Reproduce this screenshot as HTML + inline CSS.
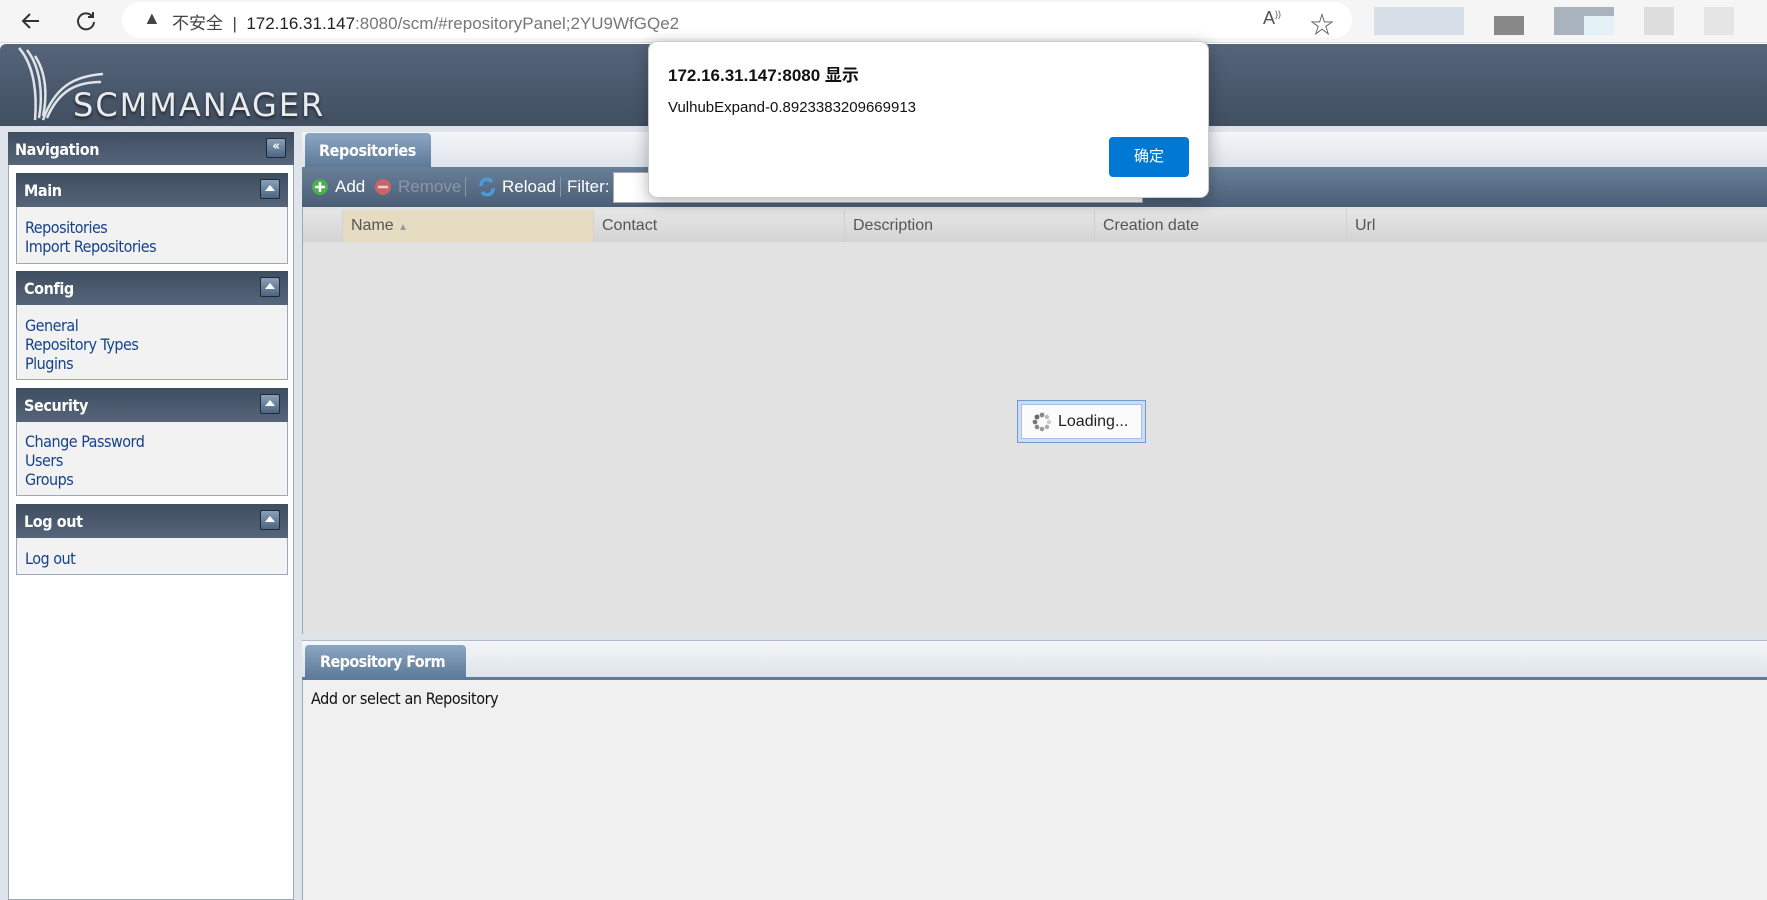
<!DOCTYPE html>
<html><head><meta charset="utf-8"><style>
*{box-sizing:border-box;margin:0;padding:0}
body{width:1767px;height:900px;overflow:hidden;background:#fff;font-family:"Liberation Sans","Noto Sans CJK SC",sans-serif;position:relative}
.a{position:absolute}
.hdr{background:linear-gradient(#3f4d60,#56657a);color:#fff;font-weight:bold;font-size:16px;font-family:"DejaVu Sans Condensed","Liberation Sans",sans-serif;letter-spacing:-0.4px;white-space:nowrap}
.box{border:1px solid #99a9bd;background:#f2f2f2}
.lnk{color:#15428b;font-size:16px;line-height:19px;font-family:"DejaVu Sans Condensed","Liberation Sans",sans-serif;letter-spacing:-0.5px}
.btn{position:absolute;right:8px;top:6px;width:20px;height:20px;border:1px solid #1d2a38;background:linear-gradient(#8aa0b8,#4c6580);border-radius:2px}
.btn.t::after{content:"";position:absolute;left:4px;top:5px;border-left:5px solid transparent;border-right:5px solid transparent;border-bottom:6px solid #fff}
.col{position:absolute;top:210px;height:32px;line-height:32px;color:#555;font-size:16px;border-left:1px solid #d0d0d0;padding-left:8px}
</style></head><body>
<div class="a" style="left:0;top:0;width:1767px;height:43px;background:#f5f5f5;border-bottom:1px solid #ddd"></div>
<svg class="a" style="left:18px;top:8px" width="26" height="26" viewBox="0 0 26 26"><path d="M21 13H5M12 6l-7 7 7 7" stroke="#333" stroke-width="2" fill="none"/></svg>
<svg class="a" style="left:73px;top:8px" width="26" height="26" viewBox="0 0 26 26"><path d="M19 8A8 8 0 1 0 21 14M20 4v5h-5" stroke="#333" stroke-width="2" fill="none"/></svg>
<div class="a" style="left:122px;top:2px;width:1230px;height:36px;background:#fff;border-radius:18px"></div>
<div class="a" style="left:143px;top:8px;font-size:18px;color:#444">▲</div>
<div class="a" style="left:172px;top:9px;font-size:17px;color:#444">不安全 &nbsp;|&nbsp; <span style="color:#222">172.16.31.147</span><span style="color:#777">:8080/scm/#repositoryPanel;2YU9WfGQe2</span></div>
<div class="a" style="left:1263px;top:8px;font-size:18px;color:#555">A<sup style="font-size:9px">))</sup></div>
<div class="a" style="left:1310px;top:5px;font-size:24px;color:#555">☆</div>
<div class="a" style="left:1374px;top:7px;width:90px;height:28px;background:#d6dfe8"></div>
<div class="a" style="left:1494px;top:16px;width:30px;height:19px;background:#888"></div>
<div class="a" style="left:1554px;top:7px;width:60px;height:28px;background:#a9b3bd"></div>
<div class="a" style="left:1584px;top:16px;width:30px;height:19px;background:#e3f0f6"></div>
<div class="a" style="left:1644px;top:7px;width:30px;height:28px;background:#ddd"></div>
<div class="a" style="left:1704px;top:7px;width:30px;height:28px;background:#e5e5e5"></div>
<div class="a" style="left:0;top:44px;width:1767px;height:82px;background:linear-gradient(#56647a,#414f62);border-radius:6px 0 0 0"></div>
<svg class="a" style="left:15px;top:46px" width="90" height="76" viewBox="0 0 90 76"><g stroke="#dfe3ea" fill="none" stroke-width="2.5"><path d="M4 2C20 20 22 50 20 74"/><path d="M12 4C26 22 28 50 24 72"/><path d="M20 10C32 28 32 52 28 70"/><path d="M28 74C40 40 60 30 88 28"/><path d="M32 72C44 44 62 36 86 36"/></g></svg>
<div class="a" style="left:73px;top:86px;font-size:32px;color:#e8ebef;letter-spacing:2px;font-family:'DejaVu Sans','Liberation Sans',sans-serif;text-shadow:0 2px 3px #222">SCMMANAGER</div>
<div class="a" style="left:0;top:126px;width:301px;height:774px;background:#dfe4eb"></div>
<div class="a" style="left:8px;top:132px;width:286px;height:768px;background:#fff;border:1px solid #99a9bd"></div>
<div class="a hdr" style="left:8px;top:132px;width:286px;height:33px;padding:8px 7px">Navigation<div class="btn" style="top:6px;font-size:13px;line-height:16px;text-align:center;color:#fff">«</div></div>
<div class="a box" style="left:16px;top:173px;width:272px;height:91px"></div>
<div class="a hdr" style="left:16px;top:173px;width:272px;height:34px;padding:8px 8px">Main<div class="btn t"></div></div>
<div class="a lnk" style="left:25px;top:218px">Repositories<br>Import Repositories</div>
<div class="a box" style="left:16px;top:271px;width:272px;height:109px"></div>
<div class="a hdr" style="left:16px;top:271px;width:272px;height:34px;padding:8px 8px">Config<div class="btn t"></div></div>
<div class="a lnk" style="left:25px;top:316px">General<br>Repository Types<br>Plugins</div>
<div class="a box" style="left:16px;top:388px;width:272px;height:108px"></div>
<div class="a hdr" style="left:16px;top:388px;width:272px;height:34px;padding:8px 8px">Security<div class="btn t"></div></div>
<div class="a lnk" style="left:25px;top:432px">Change Password<br>Users<br>Groups</div>
<div class="a box" style="left:16px;top:504px;width:272px;height:71px"></div>
<div class="a hdr" style="left:16px;top:504px;width:272px;height:34px;padding:8px 8px">Log out<div class="btn t"></div></div>
<div class="a lnk" style="left:25px;top:549px">Log out</div>
<div class="a" style="left:301px;top:126px;width:1466px;height:774px;background:#dfe4eb"></div>
<div class="a" style="left:302px;top:132px;width:1465px;height:36px;background:linear-gradient(#f4f6f8,#dde3ea)"></div>
<div class="a hdr" style="left:305px;top:133px;width:126px;height:34px;padding:8px 14px;background:linear-gradient(#8ca6c2,#5d7a99);border-radius:4px 4px 0 0">Repositories</div>
<div class="a" style="left:302px;top:167px;width:1465px;height:40px;background:linear-gradient(#6a7f98,#4a5e76)"></div>
<svg class="a" style="left:311px;top:178px" width="18" height="18"><circle cx="9" cy="9" r="8" fill="#4caf50"/><path d="M9 4v10M4 9h10" stroke="#fff" stroke-width="2.5"/></svg>
<div class="a" style="left:335px;top:177px;color:#fff;font-size:17px">Add</div>
<svg class="a" style="left:374px;top:178px" width="18" height="18"><circle cx="9" cy="9" r="8" fill="#c76666"/><path d="M4 9h10" stroke="#f0d0d0" stroke-width="2.5"/></svg>
<div class="a" style="left:398px;top:177px;color:#8896a8;font-size:17px">Remove</div>
<div class="a" style="left:465px;top:177px;width:1px;height:20px;background:#8595aa"></div>
<svg class="a" style="left:477px;top:176px" width="20" height="22"><path d="M4 10A6 6 0 0 1 15 6M16 12A6 6 0 0 1 5 16" stroke="#4d9ad8" stroke-width="3.5" fill="none"/></svg>
<div class="a" style="left:502px;top:177px;color:#fff;font-size:17px">Reload</div>
<div class="a" style="left:560px;top:177px;width:1px;height:20px;background:#8595aa"></div>
<div class="a" style="left:567px;top:177px;color:#fff;font-size:17px">Filter:</div>
<div class="a" style="left:613px;top:172px;width:530px;height:31px;background:#fff;border:1px solid #aab"></div>
<div class="a" style="left:302px;top:207px;width:1465px;height:427px;background:#e2e2e2;border-left:1px solid #99a9bd"></div>
<div class="a" style="left:303px;top:210px;width:1464px;height:32px;background:linear-gradient(#e6e6e6,#d4d4d4)"></div>
<div class="col" style="left:342px;width:251px;background:#e6dcc2">Name <span style="font-size:10px;color:#999">▲</span></div>
<div class="col" style="left:593px">Contact</div>
<div class="col" style="left:844px">Description</div>
<div class="col" style="left:1094px">Creation date</div>
<div class="col" style="left:1346px">Url</div>
<div class="a" style="left:1017px;top:400px;width:129px;height:43px;border:1px solid #6e9ad4;padding:3px;background:#cfdcf0"><div style="background:#fbfbfb;height:100%;border:1px solid #a8c0e4;font-size:16px;line-height:33px;padding-left:36px;color:#222;position:relative">Loading...<svg style="position:absolute;left:10px;top:7px" width="20" height="20"><g fill="#888"><circle cx="10" cy="3" r="2.4"/><circle cx="15" cy="5" r="2.2" fill="#bbb"/><circle cx="17" cy="10" r="2.2" fill="#ccc"/><circle cx="15" cy="15" r="2.2" fill="#aaa"/><circle cx="10" cy="17" r="2.3" fill="#999"/><circle cx="5" cy="15" r="2.3"/><circle cx="3" cy="10" r="2.4" fill="#777"/><circle cx="5" cy="5" r="2.4" fill="#666"/></g></svg></div></div>
<div class="a" style="left:302px;top:640px;width:1465px;height:38px;background:linear-gradient(#f4f6f8,#dde3ea);border-top:1px solid #b0bccb"></div>
<div class="a hdr" style="left:305px;top:645px;width:161px;height:33px;padding:7px 0 0 15px;background:linear-gradient(#8ca6c2,#5d7a99);border-radius:4px 4px 0 0;letter-spacing:-0.6px">Repository Form</div>
<div class="a" style="left:302px;top:677px;width:1465px;height:3px;background:#5d7a99"></div>
<div class="a" style="left:302px;top:680px;width:1465px;height:220px;background:#f0f0f0;border-left:1px solid #99a9bd"></div>
<div class="a" style="left:311px;top:689px;font-size:16px;color:#111;font-family:'DejaVu Sans Condensed','Liberation Sans',sans-serif;letter-spacing:-0.4px">Add or select an Repository</div>
<div class="a" style="left:648px;top:41px;width:561px;height:157px;background:#fff;border-radius:9px;border:1px solid #ccc;box-shadow:0 4px 16px rgba(0,0,0,.3)"></div>
<div class="a" style="left:668px;top:61px;font-size:17px;font-weight:bold;color:#111">172.16.31.147:8080 显示</div>
<div class="a" style="left:668px;top:99px;font-size:15px;color:#111">VulhubExpand-0.8923383209669913</div>
<div class="a" style="left:1109px;top:137px;width:80px;height:40px;background:#0078d4;border-radius:4px;color:#fff;font-size:15px;text-align:center;line-height:40px">确定</div>
</body></html>
